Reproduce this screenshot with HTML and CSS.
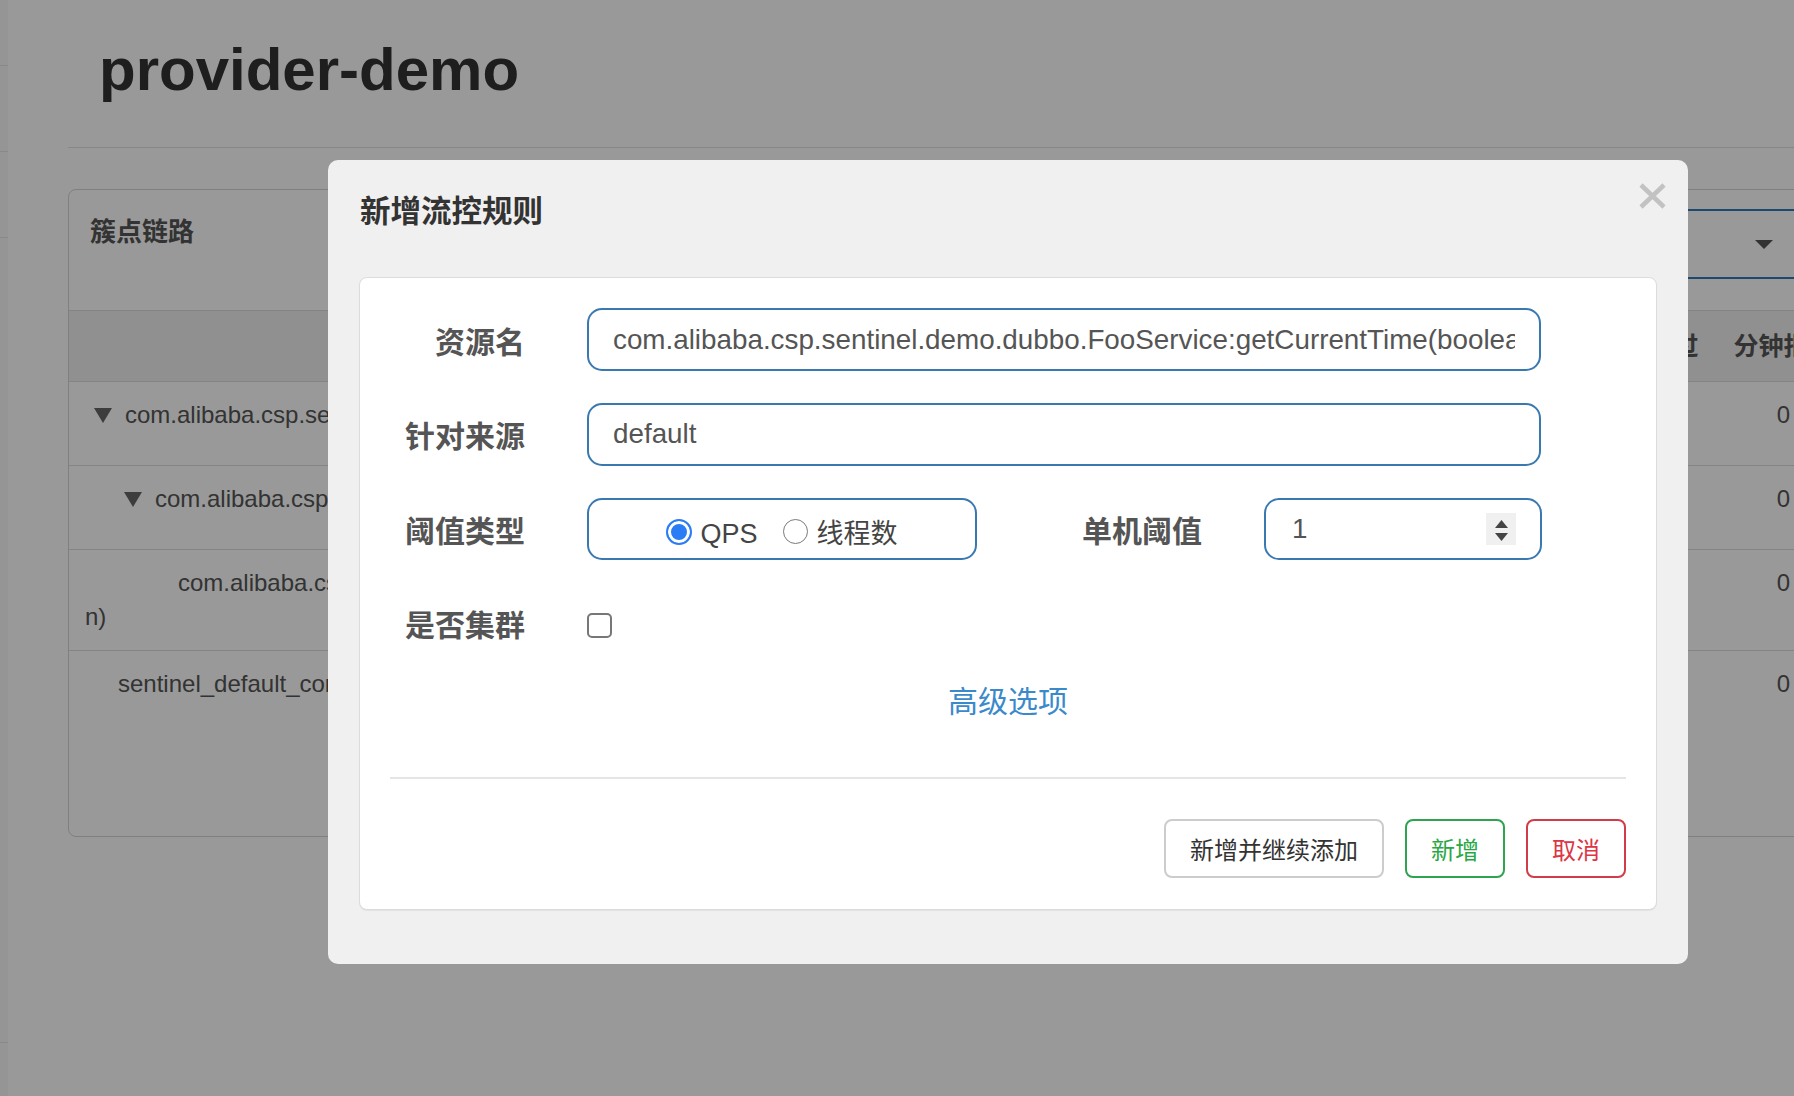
FILE: index.html
```html
<!doctype html>
<html>
  <head>
    <meta charset="utf-8">
    <title>provider-demo</title>
    <link rel="stylesheet" href="styles.css">
  </head>
  <body>
    <div class="layout">
      <div class="sidebar">
        <div class="nav-item first"></div>
        <div class="nav-item"></div>
        <div class="nav-item"></div>
        <div class="nav-item rest"></div>
      </div>
      <div class="main">
        <h1 class="page-title">provider-demo</h1>
        <div class="card">
          <div class="card-head">
            <h3 class="card-title">簇点链路</h3>
            <div class="select-box"><span class="caret"></span></div>
          </div>
          <div class="tree-table">
            <div class="tr head">
              <div class="th">资源名</div>
              <div class="th">通过QPS</div>
              <div class="th">拒绝QPS</div>
              <div class="th">线程数</div>
              <div class="th">平均RT</div>
              <div class="th">分钟通过</div>
              <div class="th">分钟拒绝</div>
              <div class="th">操作</div>
            </div>
            <div class="tr">
              <div class="td name"><div class="node lvl0"><span class="tri"></span>com.alibaba.csp.sentinel.demo.dubbo.FooService</div></div>
              <div class="td">0</div><div class="td">0</div><div class="td">0</div><div class="td">0</div><div class="td">0</div><div class="td">0</div><div class="td"></div>
            </div>
            <div class="tr">
              <div class="td name"><div class="node lvl1"><span class="tri"></span>com.alibaba.csp.sentinel.demo.dubbo.FooService:getCurrentTime(boolean)</div></div>
              <div class="td">0</div><div class="td">0</div><div class="td">0</div><div class="td">0</div><div class="td">0</div><div class="td">0</div><div class="td"></div>
            </div>
            <div class="tr">
              <div class="td name leaf">com.alibaba.csp.sentinel.demo.dubbo.FooService:getCurrentTime(boolea<br>n)</div>
              <div class="td">0</div><div class="td">0</div><div class="td">0</div><div class="td">0</div><div class="td">0</div><div class="td">0</div><div class="td"></div>
            </div>
            <div class="tr last">
              <div class="td name"><div class="node ctx">sentinel_default_context</div></div>
              <div class="td">0</div><div class="td">0</div><div class="td">0</div><div class="td">0</div><div class="td">0</div><div class="td">0</div><div class="td"></div>
            </div>
          </div>
        </div>
      </div>
    </div>

    <div class="backdrop"></div>

    <div class="modal">
      <div class="modal-head">
        <h4 class="modal-title">新增流控规则</h4>
        <span class="close">
          <svg width="27" height="26" viewBox="0 0 27 26"><path d="M2 2 L25 24 M25 2 L2 24" stroke="#c2c2c2" stroke-width="4.5" fill="none"/></svg>
        </span>
      </div>
      <div class="form-panel">
        <div class="fields">
          <div class="form-row">
            <label class="label">资源名</label>
            <input class="input" type="text" value="com.alibaba.csp.sentinel.demo.dubbo.FooService:getCurrentTime(boolean)" readonly>
          </div>
          <div class="form-row">
            <label class="label">针对来源</label>
            <input class="input" type="text" value="default" readonly>
          </div>
          <div class="form-row">
            <label class="label">阈值类型</label>
            <div class="radio-box">
              <span class="radio checked"></span><span class="radio-text">QPS</span>
              <span class="radio"></span><span class="radio-text">线程数</span>
            </div>
            <label class="label wide">单机阈值</label>
            <div class="number">
              <input type="text" value="1" readonly>
              <span class="spin">
                <svg width="30" height="32" viewBox="0 0 30 32"><polygon points="9,15 15.5,7 22,15" fill="#444"/><polygon points="9,20 22,20 15.5,28" fill="#444"/></svg>
              </span>
            </div>
          </div>
          <div class="form-row">
            <label class="label">是否集群</label>
            <span class="checkbox"></span>
          </div>
        </div>
        <a class="adv" href="#">高级选项</a>
        <div class="divider"></div>
        <div class="actions">
          <button class="btn">新增并继续添加</button>
          <button class="btn ok">新增</button>
          <button class="btn cancel">取消</button>
        </div>
      </div>
    </div>
  </body>
</html>
```

FILE: styles.css
```css
* {
  box-sizing: border-box;
}

html, body {
  margin: 0;
  padding: 0;
  overflow: hidden;
  height: 100%;
}

body {
  font-family: "Liberation Sans", "Noto Sans CJK SC", sans-serif;
  background: #fff;
  color: #555;
}

.layout {
  display: flex;
  height: 100%;
}

.sidebar {
  width: 8px;
  flex: none;
  background: #f8f8f8;
}
.nav-item {
  height: 86px;
  border-bottom: 1px solid #e4e4e4;
}
.nav-item.first {
  height: 66px;
}
.nav-item.rest {
  height: 805px;
}

.main {
  flex: none;
  width: 1994px;
  padding-left: 60px;
}

.page-title {
  margin: 0;
  padding: 34px 0 42px 31px;
  font-size: 60px;
  line-height: 71px;
  font-weight: bold;
  color: #333;
  border-bottom: 1px solid #e2e2e2;
}

.card {
  margin-top: 41px;
  border: 1px solid #d5d5d5;
  border-radius: 8px;
  padding-bottom: 101px;
}

.card-head {
  height: 121px;
  border-bottom: 1px solid #ddd;
  padding-left: 21px;
  display: flex;
  justify-content: space-between;
  align-items: flex-start;
}

.card-title {
  margin: 0;
  padding-top: 25px;
  font-size: 26px;
  line-height: 34px;
  font-weight: bold;
  color: #555;
}

.select-box {
  margin-top: 19px;
  margin-right: 201px;
  width: 420px;
  height: 70px;
  border: 2px solid #337ab7;
  border-radius: 6px;
  display: flex;
  justify-content: flex-end;
  align-items: center;
  padding-right: 25px;
}
.caret {
  width: 0;
  height: 0;
  border-left: 9.5px solid transparent;
  border-right: 9.5px solid transparent;
  border-top: 9px solid #555;
}

.tr {
  display: grid;
  grid-template-columns: 1fr repeat(6, 135px) 150px;
  border-bottom: 1px solid #ddd;
  min-height: 84px;
}
.tr.head {
  min-height: 71px;
  background: #f0f0f0;
}
.tr.last {
  border-bottom: none;
}

.th {
  text-align: center;
  font-size: 25px;
  font-weight: bold;
  line-height: 70px;
  color: #555;
  white-space: nowrap;
}

.td {
  padding: 16px;
  font-size: 24px;
  line-height: 34px;
  text-align: center;
  color: #555;
  white-space: nowrap;
}
.td.name {
  text-align: left;
}
.td.leaf {
  text-indent: 93px;
}

.node {
  display: flex;
  align-items: center;
  height: 34px;
}
.node.lvl0 {
  padding-left: 9px;
}
.node.lvl1 {
  padding-left: 39px;
}
.node.ctx {
  padding-left: 33px;
}
.tri {
  width: 0;
  height: 0;
  border-left: 9px solid transparent;
  border-right: 9px solid transparent;
  border-top: 15px solid #666;
  margin-right: 13px;
}

.backdrop {
  position: fixed;
  left: 0;
  top: 0;
  right: 0;
  bottom: 0;
  background: rgba(0, 0, 0, 0.4);
}

/* dialog */
.modal {
  position: fixed;
  left: 328px;
  top: 160px;
  width: 1360px;
  background: #f0f0f0;
  border-radius: 10px;
  padding: 0 31px 54px;
}

.modal-head {
  height: 117px;
  padding-top: 30px;
}
.modal-title {
  margin: 0;
  padding-left: 1px;
  font-size: 30.5px;
  line-height: 42px;
  font-weight: bold;
  color: #333;
}
.close {
  position: absolute;
  right: 22px;
  top: 23px;
  width: 27px;
  height: 26px;
}
.close svg {
  display: block;
}

.form-panel {
  background: #fff;
  border: 1px solid #dcdcdc;
  border-radius: 8px;
  box-shadow: 0 1px 1px rgba(0, 0, 0, 0.06);
  padding: 30px 30px 31px;
}

.fields {
  display: flex;
  flex-direction: column;
  gap: 31.5px;
}

.form-row {
  display: flex;
  align-items: center;
  height: 63px;
}

.label {
  flex: none;
  width: 135px;
  margin-right: 62px;
  padding-top: 6px;
  text-align: right;
  font-size: 30px;
  line-height: 42px;
  font-weight: bold;
  color: #555;
}
.label.wide {
  width: 225px;
}

.input {
  width: 954px;
  height: 63px;
  border: 2px solid #3a78b0;
  border-radius: 15px;
  padding: 0 24px;
  font-family: inherit;
  font-size: 27.8px;
  color: #555;
  background: #fff;
  outline: none;
}

.radio-box {
  flex: none;
  width: 390px;
  height: 62px;
  border: 2px solid #3a78b0;
  border-radius: 15px;
  padding-top: 6px;
  display: flex;
  justify-content: center;
  align-items: center;
}
.radio {
  width: 25px;
  height: 25px;
  border: 1.5px solid #7a7a7a;
  border-radius: 50%;
  background: #fff;
  margin-right: 9px;
}
.radio.checked {
  width: 26px;
  height: 26px;
  border: 2px solid #2a7df4;
  background: #2a7df4;
  box-shadow: inset 0 0 0 3px #fff;
  margin-right: 8px;
}
.radio-text {
  padding-top: 4px;
  font-size: 27px;
  line-height: 40px;
  color: #444;
  margin-right: 25px;
}
.radio-text:last-child {
  margin-right: 0;
}

.number {
  flex: none;
  width: 278px;
  height: 62px;
  border: 2px solid #3a78b0;
  border-radius: 15px;
  display: flex;
  align-items: center;
  padding: 0 24px 0 26px;
}
.number input {
  flex: 1;
  min-width: 0;
  border: none;
  outline: none;
  padding: 0;
  font-family: inherit;
  font-size: 27.8px;
  color: #555;
  background: transparent;
}
.spin {
  width: 30px;
  height: 32px;
  background: #f0f0f0;
}
.spin svg {
  display: block;
}

.checkbox {
  width: 25px;
  height: 25px;
  margin-top: 4px;
  border: 2px solid #777;
  border-radius: 5px;
  background: #fff;
}

.adv {
  display: block;
  margin-top: 26px;
  text-align: center;
  font-size: 30px;
  line-height: 42px;
  color: #3a8acb;
  text-decoration: none;
}

.divider {
  height: 2px;
  background: #e5e5e5;
  margin-top: 54px;
}

.actions {
  display: flex;
  justify-content: flex-end;
  gap: 21px;
  margin-top: 40.5px;
}

.btn {
  height: 59px;
  padding: 0 24px;
  border: 2px solid #ccc;
  border-radius: 8px;
  background: #fff;
  font-family: inherit;
  font-size: 24px;
  color: #333;
}
.btn.ok {
  border-color: #2ea44f;
  color: #28a745;
}
.btn.cancel {
  border-color: #d23b48;
  color: #dc3545;
}
```
